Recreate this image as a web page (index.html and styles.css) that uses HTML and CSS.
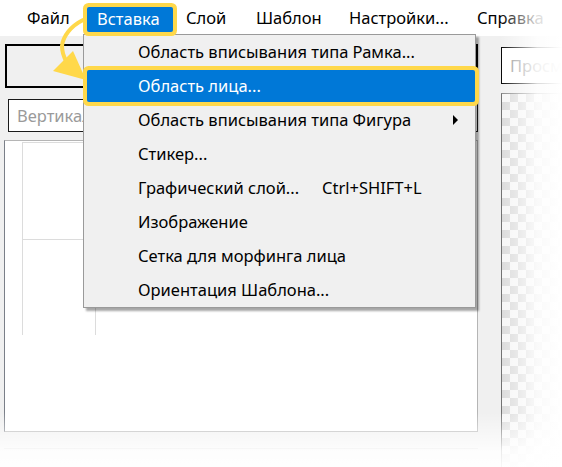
FILE: index.html
```html
<!DOCTYPE html>
<html lang="ru">
<head>
<meta charset="utf-8">
<link rel="stylesheet" href="styles.css">
</head>
<body>
<div class="screen">
  <div class="menubar">
    <span class="mb-item mb-file">Файл</span>
    <span class="mb-item mb-active">Вставка</span>
    <span class="mb-item mb-layer">Слой</span>
    <span class="mb-item mb-tpl">Шаблон</span>
    <span class="mb-item mb-set">Настройки...</span>
    <span class="mb-item">Справка</span>
  </div>
  <div class="workspace">
    <div class="left-col">
      <div class="big-button"></div>
      <div class="field"><span class="placeholder">Вертикальная</span></div>
      <div class="panel">
        <div class="grid">
          <div class="cell"></div>
          <div class="cell"></div>
        </div>
      </div>
      <div class="panel2"></div>
    </div>
    <div class="right-col">
      <div class="field field-right"><span class="placeholder">Просмотр</span></div>
      <div class="checker"></div>
    </div>
  </div>

  <div class="dropdown">
    <div class="dd-item">Область вписывания типа Рамка...</div>
    <div class="dd-item dd-active">Область лица...</div>
    <div class="dd-item">Область вписывания типа Фигура<span class="submenu"></span></div>
    <div class="dd-item">Стикер...</div>
    <div class="dd-item">Графический слой...<span class="shortcut">Ctrl+SHIFT+L</span></div>
    <div class="dd-item">Изображение</div>
    <div class="dd-item">Сетка для морфинга лица</div>
    <div class="dd-item">Ориентация Шаблона...</div>
  </div>

  <svg class="pointer" width="100" height="100" viewBox="0 0 100 100">
    <path d="M83 20 C71 26 63 36 62 46 C62 52 64 57 66 61" fill="none" stroke="#ffd84a" stroke-width="4" stroke-linecap="round"/>
    <polygon points="53,71 73,51 86,80" fill="#ffd84a"/>
  </svg>

  <div class="fade-right"></div>
  <div class="fade-bottom"></div>
</div>
</body>
</html>
```

FILE: styles.css
```css
* { box-sizing: border-box; }
html, body { margin: 0; padding: 0; }
body {
  width: 562px;
  height: 467px;
  overflow: hidden;
  background: #f0f0f0;
  font-family: "Noto Sans", "Open Sans", sans-serif;
  font-size: 16.5px;
  color: #000;
}
.screen {
  position: relative;
  width: 562px;
  height: 467px;
  overflow: hidden;
}
.menubar {
  height: 36px;
  background: #ffffff;
  display: flex;
  align-items: center;
  padding-left: 27px;
}
.mb-item {
  flex: none;
  line-height: 24px;
  white-space: nowrap;
}
.mb-file { width: 60px; }
.mb-active {
  position: relative;
  z-index: 5;
  width: 86px;
  margin-right: 13px;
  padding-left: 10px;
  background: #0078d7;
  color: #fff;
  height: 25px;
  line-height: 24px;
  margin-top: 3px;
  border-radius: 2px;
  box-shadow: 0 0 0 4px #ffd84a;
}
.mb-layer { width: 70px; }
.mb-tpl { width: 93px; }
.mb-set { width: 128px; }
.workspace {
  display: flex;
  height: 431px;
}
.left-col {
  flex: none;
  width: 478px;
  padding-left: 4px;
  display: flex;
  flex-direction: column;
}
.big-button {
  margin: 8px 0 0 1px;
  height: 46px;
  border: 2px solid #000;
}
.field {
  margin: 11px 0 0 4px;
  height: 34px;
  border: 1px solid #1a1a1a;
  background: #fff;
  display: flex;
  align-items: center;
  padding-left: 8px;
  overflow: hidden;
  white-space: nowrap;
}
.placeholder { color: #9a9a9a; }
.panel {
  margin-top: 8px;
  height: 306px;
  background: #fff;
  border: 1px solid #b5b5b5;
  border-left-color: #7a7f88;
  padding: 1px 0 0 17px;
}
.grid {
  width: 74px;
  display: flex;
  flex-direction: column;
}
.cell {
  height: 97px;
  border: 1px solid #dcdcdc;
  border-bottom: none;
}
.cell + .cell { height: 96px; }
.panel2 {
  margin-top: 16px;
  height: 20px;
  border-top: 1px solid #d0d0d0;
}
.right-col {
  margin-left: 23px;
  flex: 1;
  min-width: 0;
  display: flex;
  flex-direction: column;
}
.field-right {
  margin: 11px 0 0 0;
  height: 37px;
  border: 1px solid #000;
  border-right: none;
}
.checker {
  margin-top: 9px;
  flex: 1;
  border-left: 1px solid #6e6e6e;
  border-top: 1px solid #8a8a8a;
  background-color: #fff;
  background-image: conic-gradient(#dadada 25%, #f6f6f6 0 50%, #dadada 0 75%, #f6f6f6 0);
  background-size: 16px 16px;
}
.dropdown {
  position: absolute;
  left: 83px;
  top: 34px;
  width: 393px;
  height: 274px;
  background: #f0f0f0;
  border: 1px solid #9a9a9a;
  box-shadow: 3px 3px 2px rgba(0, 0, 0, 0.35);
  z-index: 4;
}
.dd-item {
  position: relative;
  height: 34px;
  line-height: 34px;
  padding-left: 54px;
  white-space: nowrap;
}
.dd-active {
  height: 32px;
  line-height: 32px;
  margin: 1px 0 1px 3px;
  padding-left: 51px;
  background: #0078d7;
  color: #fff;
  border-radius: 2px;
  box-shadow: 0 0 0 4px #ffd84a;
}
.shortcut {
  position: absolute;
  left: 238px;
}
.submenu {
  position: absolute;
  left: 369px;
  top: 12px;
  width: 0;
  height: 0;
  border-top: 5px solid transparent;
  border-bottom: 5px solid transparent;
  border-left: 5px solid #000;
}
.pointer {
  position: absolute;
  left: 0;
  top: 0;
  z-index: 6;
}
.fade-right {
  position: absolute;
  top: 0;
  right: 0;
  width: 62px;
  height: 467px;
  background: linear-gradient(to right, rgba(255,255,255,0) 0%, rgba(255,255,255,0.85) 60%, #fff 100%);
  z-index: 8;
  pointer-events: none;
}
.fade-bottom {
  position: absolute;
  left: 0;
  bottom: 0;
  width: 562px;
  height: 55px;
  background: linear-gradient(to bottom, rgba(255,255,255,0) 0%, rgba(255,255,255,0.85) 70%, rgba(255,255,255,0.95) 100%);
  z-index: 8;
  pointer-events: none;
}
```
